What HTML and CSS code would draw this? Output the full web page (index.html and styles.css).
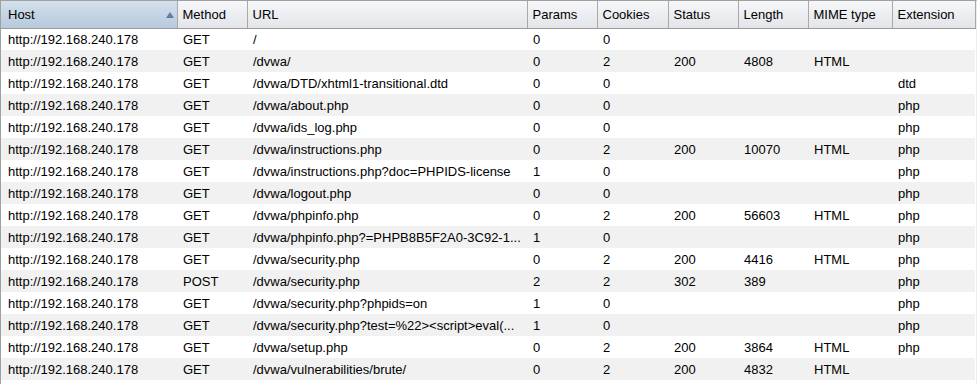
FILE: index.html
```html
<!DOCTYPE html>
<html>
<head>
<meta charset="utf-8">
<link rel="stylesheet" href="styles.css">
</head>
<body>
<div class="frame">
<table class="grid">
<colgroup>
<col class="c-host"><col class="c-method"><col class="c-url"><col class="c-params"><col class="c-cookies"><col class="c-status"><col class="c-length"><col class="c-mime"><col class="c-ext">
</colgroup>
<thead>
<tr>
<th class="sorted"><span class="hlabel">Host</span><span class="arrow"></span></th>
<th>Method</th><th>URL</th><th>Params</th><th>Cookies</th><th>Status</th><th>Length</th><th>MIME type</th><th>Extension</th>
</tr>
</thead>
<tbody>
<tr><td>http://192.168.240.178</td><td>GET</td><td>/</td><td>0</td><td>0</td><td></td><td></td><td></td><td></td></tr>
<tr><td>http://192.168.240.178</td><td>GET</td><td>/dvwa/</td><td>0</td><td>2</td><td>200</td><td>4808</td><td>HTML</td><td></td></tr>
<tr><td>http://192.168.240.178</td><td>GET</td><td>/dvwa/DTD/xhtml1-transitional.dtd</td><td>0</td><td>0</td><td></td><td></td><td></td><td>dtd</td></tr>
<tr><td>http://192.168.240.178</td><td>GET</td><td>/dvwa/about.php</td><td>0</td><td>0</td><td></td><td></td><td></td><td>php</td></tr>
<tr><td>http://192.168.240.178</td><td>GET</td><td>/dvwa/ids_log.php</td><td>0</td><td>0</td><td></td><td></td><td></td><td>php</td></tr>
<tr><td>http://192.168.240.178</td><td>GET</td><td>/dvwa/instructions.php</td><td>0</td><td>2</td><td>200</td><td>10070</td><td>HTML</td><td>php</td></tr>
<tr><td>http://192.168.240.178</td><td>GET</td><td>/dvwa/instructions.php?doc=PHPIDS-license</td><td>1</td><td>0</td><td></td><td></td><td></td><td>php</td></tr>
<tr><td>http://192.168.240.178</td><td>GET</td><td>/dvwa/logout.php</td><td>0</td><td>0</td><td></td><td></td><td></td><td>php</td></tr>
<tr><td>http://192.168.240.178</td><td>GET</td><td>/dvwa/phpinfo.php</td><td>0</td><td>2</td><td>200</td><td>56603</td><td>HTML</td><td>php</td></tr>
<tr><td>http://192.168.240.178</td><td>GET</td><td>/dvwa/phpinfo.php?=PHPB8B5F2A0-3C92-1...</td><td>1</td><td>0</td><td></td><td></td><td></td><td>php</td></tr>
<tr><td>http://192.168.240.178</td><td>GET</td><td>/dvwa/security.php</td><td>0</td><td>2</td><td>200</td><td>4416</td><td>HTML</td><td>php</td></tr>
<tr><td>http://192.168.240.178</td><td>POST</td><td>/dvwa/security.php</td><td>2</td><td>2</td><td>302</td><td>389</td><td></td><td>php</td></tr>
<tr><td>http://192.168.240.178</td><td>GET</td><td>/dvwa/security.php?phpids=on</td><td>1</td><td>0</td><td></td><td></td><td></td><td>php</td></tr>
<tr><td>http://192.168.240.178</td><td>GET</td><td>/dvwa/security.php?test=%22&gt;&lt;script&gt;eval(...</td><td>1</td><td>0</td><td></td><td></td><td></td><td>php</td></tr>
<tr><td>http://192.168.240.178</td><td>GET</td><td>/dvwa/setup.php</td><td>0</td><td>2</td><td>200</td><td>3864</td><td>HTML</td><td>php</td></tr>
<tr><td>http://192.168.240.178</td><td>GET</td><td>/dvwa/vulnerabilities/brute/</td><td>0</td><td>2</td><td>200</td><td>4832</td><td>HTML</td><td></td></tr>
</tbody>
</table>
</div>
</body>
</html>
```

FILE: styles.css
```css
html, body {
  margin: 0;
  padding: 0;
  background: #ffffff;
}
body {
  width: 979px;
  height: 384px;
  overflow: hidden;
  font-family: "Liberation Sans", Arial, sans-serif;
  font-size: 13px;
  color: #000;
}
.frame {
  width: 977px;
  height: 384px;
  border-left: 1px solid #a0a0a0;
  border-right: 1px solid #ececec;
  box-sizing: border-box;
  border-top: 1px solid #a0a0a0;
  background: #ffffff;
}
.grid {
  border-collapse: collapse;
  table-layout: fixed;
  width: 974px;
}
.c-host { width: 176px; }
.c-method { width: 70px; }
.c-url { width: 280px; }
.c-params { width: 70px; }
.c-cookies { width: 71px; }
.c-status { width: 70px; }
.c-length { width: 70px; }
.c-mime { width: 84px; }
.c-ext { width: 83px; }
.grid th {
  height: 27px;
  padding: 0 0 0 5px;
  text-align: left;
  font-weight: normal;
  background: linear-gradient(#f6f7f9, #e2e4e9);
  border-right: 1px solid #a9a9a9;
  border-bottom: 1px solid #9c9c9c;
  white-space: nowrap;
  overflow: hidden;
  box-sizing: border-box;
}
.grid th:first-child {
  padding-left: 7px;
}
.grid th.sorted {
  background: linear-gradient(#d4e0ec, #b7c9dc);
  position: relative;
}
.arrow {
  position: absolute;
  right: 3px;
  top: 11px;
  width: 0;
  height: 0;
  border-left: 4px solid transparent;
  border-right: 4px solid transparent;
  border-bottom: 6px solid #5b7fa6;
}
.grid td {
  height: 22px;
  padding: 0 0 0 6px;
  white-space: nowrap;
  overflow: hidden;
  box-sizing: border-box;
}
.grid td:first-child {
  padding-left: 7px;
}
.grid tbody tr:nth-child(even) td {
  background: #f1f1f1;
}
```
